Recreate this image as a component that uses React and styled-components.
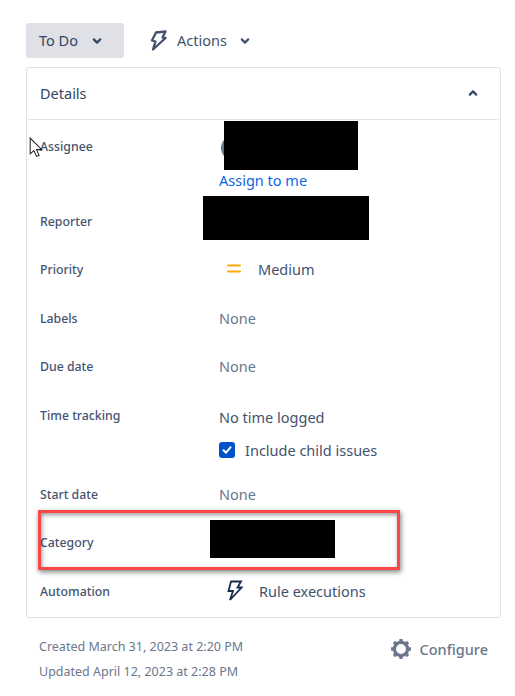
import styled, { createGlobalStyle } from "styled-components";

const GlobalStyle = createGlobalStyle`
  html, body {
    margin: 0;
    background: #fff;
    font-family: "Noto Sans", "Open Sans", sans-serif;
  }
`;

const Page = styled.div`
  position: relative;
  width: 515px;
  height: 696px;
  padding: 23px 14px 0 26px;
  box-sizing: border-box;
  overflow: hidden;
`;

const Toolbar = styled.div`
  display: flex;
  align-items: center;
  gap: 10px;
  height: 35px;
  margin-block-end: 9px;
`;

const StatusButton = styled.div`
  display: flex;
  align-items: center;
  width: 98px;
  height: 35px;
  padding-inline-start: 13px;
  box-sizing: border-box;
  gap: 11px;
  background: #dfe1e6;
  border-radius: 3px;
  color: #344563;
  font-size: 14.5px;
  line-height: 37px;
`;

const ActionsButton = styled.div`
  display: flex;
  align-items: center;
  padding-inline-start: 16px;
  color: #42526e;
  font-size: 14.5px;
  line-height: 37px;
  span {
    margin-inline: 10px;
  }
`;

const Card = styled.section`
  border: 1px solid #dfe1e6;
  border-radius: 3px;
  height: 551px;
  box-sizing: border-box;
`;

const CardHeader = styled.header`
  display: flex;
  align-items: center;
  justify-content: space-between;
  height: 52px;
  padding: 0 19px 1px 13px;
  border-block-end: 1px solid #dfe1e6;
  border-radius: 0 0 3px 3px;
  box-sizing: border-box;
  color: #344563;
  font-size: 14.5px;
`;

const Rows = styled.div`
  padding-block-start: 1.7px;
`;

const Row = styled.div`
  position: relative;
  display: grid;
  grid-template-columns: 179px 1fr;
  align-items: start;
  height: ${(p) => p.$height || 48.5}px;
  padding-inline-start: 13px;
  padding-block-start: 15px;
  box-sizing: border-box;
`;

const Label = styled.div`
  color: #44546f;
  font-size: 12.3px;
  font-weight: 500;
  line-height: 20px;
`;

const Value = styled.div`
  margin-block-start: -1px;
  color: ${(p) => (p.$muted ? "#6b778c" : "#42526e")};
  font-size: 14.5px;
  line-height: 20px;
`;

const IconValue = styled(Value)`
  display: flex;
  align-items: center;
  gap: 16px;
  height: 20px;
  padding-inline-start: 7px;
`;

const AssignLink = styled.a`
  display: block;
  margin-block-start: 10px;
  color: #0c66e4;
  font-size: 14.5px;
  line-height: 20px;
  text-decoration: none;
`;

const Avatar = styled.span`
  display: block;
  width: 24px;
  height: 24px;
  margin-block-start: -1px;
  margin-inline-start: 2px;
  border-radius: 50%;
  background: #5e7d8a;
`;

const CheckRow = styled.div`
  display: flex;
  align-items: center;
  gap: 10px;
  margin-block-start: 13px;
  color: #42526e;
  font-size: 14.5px;
  line-height: 20px;
`;

const TimeValue = styled.div`
  padding-block-start: 2px;
`;

const CheckBox = styled.span`
  display: flex;
  align-items: center;
  justify-content: center;
  width: 16px;
  height: 16px;
  border-radius: 3px;
  background: #0052cc;
`;

const Redaction = styled.div`
  position: absolute;
  left: ${(p) => p.$left}px;
  top: ${(p) => p.$top}px;
  width: ${(p) => p.$width}px;
  height: ${(p) => p.$height}px;
  background: #000;
`;

const Highlight = styled.div`
  position: absolute;
  left: 38px;
  top: 510px;
  width: 362px;
  height: 60px;
  box-sizing: border-box;
  border: 3px solid #f84848;
  box-shadow: 1px 2px 5px rgba(0, 0, 0, 0.5), inset 1px 2px 4px rgba(0, 0, 0, 0.4);
`;

const Cursor = styled.svg`
  position: absolute;
  left: 29px;
  top: 137px;
`;

const Footer = styled.footer`
  display: flex;
  justify-content: space-between;
  padding: 16px 13px 0 13px;
`;

const Dates = styled.div`
  color: #6b778c;
  font-size: 12.5px;
  line-height: 25px;
`;

const ConfigureLink = styled.div`
  display: flex;
  align-items: center;
  align-self: flex-start;
  gap: 8px;
  margin-block-start: 4px;
  color: #6b778c;
  font-size: 14.5px;
  font-weight: 500;
  line-height: 20px;
`;

function Chevron({ up, size = 16, color = "#344563" }) {
  return (
    <svg width={size} height={size} viewBox="0 0 16 16" fill="none">
      <path
        d={up ? "M4.8 9.6 8 6.4l3.2 3.2" : "M4.8 6.4 8 9.6l3.2-3.2"}
        stroke={color}
        strokeWidth="2.2"
        strokeLinecap="round"
        strokeLinejoin="round"
      />
    </svg>
  );
}

function ActionsBolt() {
  return (
    <svg width="17" height="21" viewBox="0 0 17 21" fill="none">
      <path
        d="M6 2.5 15.5 1.5 12.5 7.5 15.5 8 3 19.5 5.5 11.5 2 10.5z"
        stroke="#42526e"
        strokeWidth="2.3"
        strokeLinejoin="round"
      />
    </svg>
  );
}

function AutomationBolt() {
  return (
    <svg width="17" height="21" viewBox="0 0 17 21" fill="none">
      <path
        d="M5 1.5h10l-3.5 6h4L4 20l3-9H2.500z"
        stroke="#172b4d"
        strokeWidth="1.8"
        strokeLinejoin="miter"
      />
    </svg>
  );
}

function App() {
  return (
    <>
      <GlobalStyle />
      <Page>
        <Toolbar>
          <StatusButton>
            To Do
            <Chevron />
          </StatusButton>
          <ActionsButton>
            <ActionsBolt />
            <span>Actions</span>
            <Chevron color="#42526e" />
          </ActionsButton>
        </Toolbar>

        <Card>
          <CardHeader>
            Details
            <Chevron up />
          </CardHeader>
          <Rows>
            <Row $height={75}>
              <Label>Assignee</Label>
              <div>
                <Avatar />
                <AssignLink>Assign to me</AssignLink>
              </div>
            </Row>
            <Row>
              <Label>Reporter</Label>
            </Row>
            <Row>
              <Label>Priority</Label>
              <IconValue>
                <svg width="16" height="16" viewBox="0 0 16 16">
                  <rect x="1" y="3.5" width="14" height="2" rx="1" fill="#ffab00" />
                  <rect x="1" y="9.5" width="14" height="2" rx="1" fill="#ffab00" />
                </svg>
                Medium
              </IconValue>
            </Row>
            <Row>
              <Label>Labels</Label>
              <Value $muted>None</Value>
            </Row>
            <Row>
              <Label>Due date</Label>
              <Value $muted>None</Value>
            </Row>
            <Row $height={79}>
              <Label>Time tracking</Label>
              <TimeValue>
                <Value>No time logged</Value>
                <CheckRow>
                  <CheckBox>
                    <svg width="12" height="12" viewBox="0 0 12 12" fill="none">
                      <path
                        d="M2.5 6.2 5 8.7l4.5-5.4"
                        stroke="#fff"
                        strokeWidth="2"
                        strokeLinecap="round"
                        strokeLinejoin="round"
                      />
                    </svg>
                  </CheckBox>
                  Include child issues
                </CheckRow>
              </TimeValue>
            </Row>
            <Row>
              <Label>Start date</Label>
              <Value $muted>None</Value>
            </Row>
            <Row>
              <Label>Category</Label>
            </Row>
            <Row>
              <Label>Automation</Label>
              <IconValue>
                <AutomationBolt />
                Rule executions
              </IconValue>
            </Row>
          </Rows>
        </Card>

        <Footer>
          <Dates>
            <div>Created March 31, 2023 at 2:20 PM</div>
            <div>Updated April 12, 2023 at 2:28 PM</div>
          </Dates>
          <ConfigureLink>
            <svg width="22" height="22" viewBox="0 0 20 20" fill="none">
              <circle cx="10" cy="10" r="6" stroke="#6b778c" strokeWidth="3" />
              <path
                d="M10 1v3M10 16v3M1 10h3M16 10h3M3.6 3.6l2.1 2.1M14.3 14.3l2.1 2.1M3.6 16.4l2.1-2.1M14.3 5.7l2.1-2.1"
                stroke="#6b778c"
                strokeWidth="3"
              />
            </svg>
            Configure
          </ConfigureLink>
        </Footer>

        <Redaction $left={224} $top={121} $width={134} $height={49} />
        <Redaction $left={203} $top={196} $width={166} $height={44} />
        <Redaction $left={210} $top={520} $width={125} $height={38} />
        <Highlight />
        <Cursor width="15" height="21" viewBox="0 0 14 20">
          <path
            d="M1 1v15l3.5-3 2.5 5.5 2.5-1-2.5-5.5h5z"
            fill="#fff"
            stroke="#222"
            strokeWidth="1"
          />
        </Cursor>
      </Page>
    </>
  );
}

export default App;
